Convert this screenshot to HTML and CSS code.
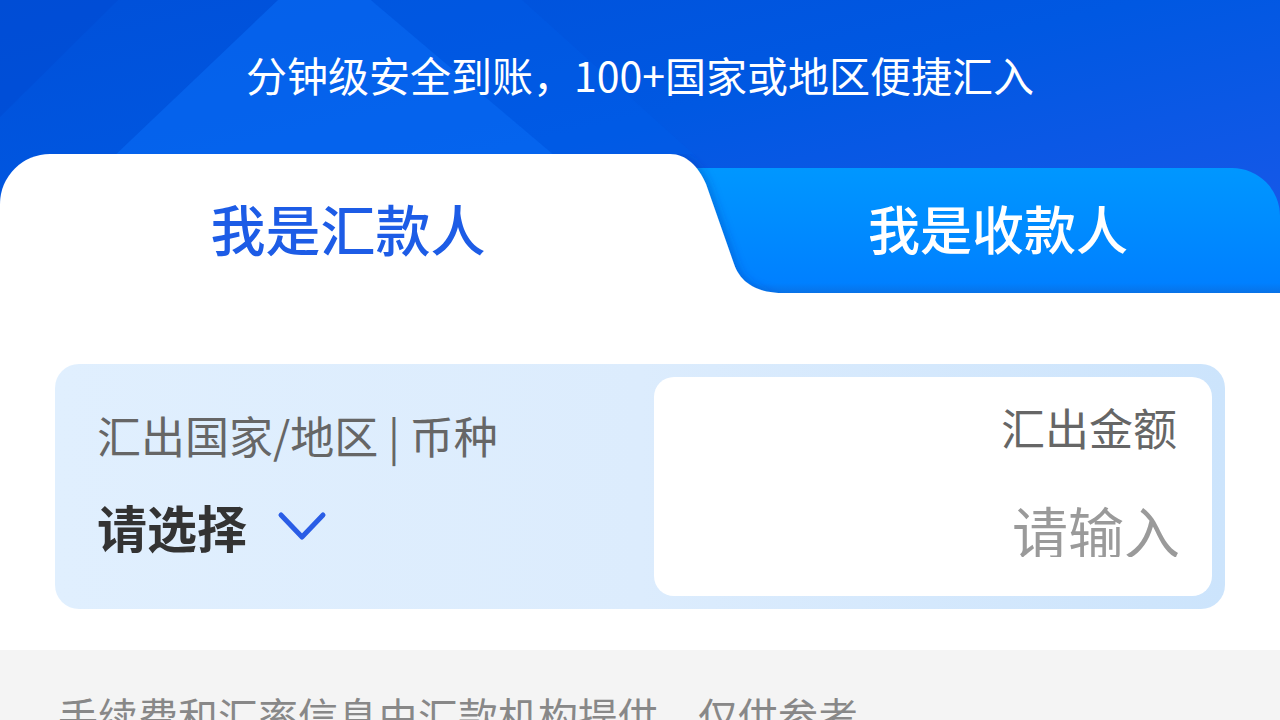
FILE: index.html
```html
<!DOCTYPE html>
<html lang="zh-CN">
  <head>
    <meta charset="UTF-8" />
    <title>跨境汇款</title>
    <link rel="stylesheet" href="styles.css">
  </head>
  <body>
    <div class="page">
      <header class="hero">
        <svg class="hero-bg" width="1280" height="293" viewBox="0 0 1280 293" aria-hidden="true">
          <defs>
            <linearGradient id="heroGrad" x1="0" y1="0" x2="1" y2="1">
              <stop offset="0" stop-color="#0050d9"/>
              <stop offset="0.45" stop-color="#0058e2"/>
              <stop offset="1" stop-color="#1d58ea"/>
            </linearGradient>
          </defs>
          <rect width="1280" height="293" fill="url(#heroGrad)"/>
          <polygon points="0,117 118,0 0,0" fill="#0049d2" opacity="0.5"/>
          <polygon points="278,0 371,0 560,160 110,160" fill="#0a70fa" opacity="0.5"/>
          <polygon points="371,0 522,0 700,160 560,160" fill="#0060ec" opacity="0.3"/>
        </svg>
        <p class="slogan">分钟级安全到账，100+国家或地区便捷汇入</p>
        <div class="tabs">
          <div class="tab tab-send">我是汇款人</div>
          <div class="tab tab-recv">
            <svg class="tab-shape" width="620" height="139" viewBox="0 0 620 139" aria-hidden="true">
              <defs>
                <linearGradient id="recvGrad" x1="0" y1="0" x2="0" y2="1">
                  <stop offset="0" stop-color="#0097ff"/>
                  <stop offset="0.92" stop-color="#0080ff"/>
                  <stop offset="1" stop-color="#0872e6"/>
                </linearGradient>
                <filter id="edge" x="-20%" y="-20%" width="160%" height="160%">
                  <feDropShadow dx="3" dy="0" stdDeviation="4" flood-color="#0038a8" flood-opacity="0.35"/>
                </filter>
              </defs>
              <path d="M0,14 H572 A48,48 0 0 1 620,62 V139 H0 Z" fill="url(#recvGrad)"/>
              <path d="M0,0 H10 C26,0 38,12 46,30 L74,110 C80,127 94,139 125,139 H0 Z" fill="#fff" filter="url(#edge)"/>
            </svg>
            <span class="tab-text">我是收款人</span>
          </div>
        </div>
      </header>

      <section class="form">
        <div class="select-card">
          <div class="pick">
            <div class="pick-label">汇出国家/地区 | 币种</div>
            <div class="pick-value">
              请选择
              <svg class="chevron" width="50" height="32" viewBox="0 0 50 32" aria-hidden="true">
                <polyline points="4,4 25,26 46,4" fill="none" stroke="#2a5de6" stroke-width="5" stroke-linecap="round" stroke-linejoin="round"/>
              </svg>
            </div>
          </div>
          <div class="amount">
            <div class="amount-label">汇出金额</div>
            <input class="amount-input" type="text" placeholder="请输入" />
          </div>
        </div>
      </section>

      <div class="notice">手续费和汇率信息由汇款机构提供，仅供参考</div>
    </div>
  </body>
</html>
```

FILE: styles.css
```css
* {
  box-sizing: border-box;
}

html,
body {
  margin: 0;
  padding: 0;
  background: #fff;
}

body {
  font-family: "Noto Sans CJK SC", "Noto Sans", sans-serif;
}

.page {
  width: 1280px;
  height: 720px;
  overflow: hidden;
}

/* header with slogan and tabs */
.hero {
  position: relative;
  height: 293px;
}

.hero-bg {
  position: absolute;
  left: 0;
  top: 0;
  z-index: 0;
}

.slogan {
  position: relative;
  margin: 0;
  padding-top: 54px;
  height: 154px;
  color: #fff;
  font-size: 41px;
  line-height: 41px;
  text-align: center;
}

.tabs {
  position: relative;
  display: flex;
  height: 139px;
}

.tab {
  display: flex;
  align-items: center;
  justify-content: center;
  padding-top: 8px;
  font-size: 55px;
  line-height: 55px;
  font-weight: 500;
}

.tab-send {
  flex: 0 0 660px;
  padding-left: 36px;
  background: #fff;
  color: #1d5ce6;
  border-top-left-radius: 50px;
}

.tab-recv {
  position: relative;
  flex: 1;
  padding-left: 56px;
  color: #fff;
  font-size: 52px;
  line-height: 52px;
}

.tab-shape {
  position: absolute;
  left: 0;
  top: 0;
}

.tab-text {
  position: relative;
}

/* country / amount card */
.form {
  padding: 71px 55px 0;
}

.select-card {
  display: flex;
  height: 245px;
  padding: 13px;
  border-radius: 24px;
  background: linear-gradient(90deg, #e0effe, #dcecfd 50%, #cce4fc);
}

.pick {
  flex: 1;
  padding: 36px 0 0 29px;
}

.pick-label {
  color: #666;
  font-size: 44px;
  line-height: 44px;
}

.pick-value {
  display: flex;
  align-items: center;
  margin-top: 44px;
  color: #333;
  font-size: 50px;
  line-height: 50px;
  font-weight: 700;
}

.chevron {
  margin-left: 30px;
  margin-top: 2px;
}

.amount {
  width: 558px;
  padding: 28px 35px 0;
  border-radius: 20px;
  background: #fff;
  text-align: right;
}

.amount-label {
  color: #666;
  font-size: 44px;
  line-height: 44px;
}

.amount-input {
  display: block;
  width: calc(100% + 3px);
  height: 56px;
  margin-top: 52px;
  padding: 0;
  border: none;
  outline: none;
  background: transparent;
  font-family: inherit;
  font-size: 56px;
  line-height: 56px;
  text-align: right;
  color: #333;
}

.amount-input::placeholder {
  color: #9a9a9a;
}

.notice {
  margin-top: 41px;
  height: 200px;
  padding: 45px 0 0 58px;
  background: #f4f4f4;
  color: #888;
  font-size: 40px;
  line-height: 40px;
}
```
